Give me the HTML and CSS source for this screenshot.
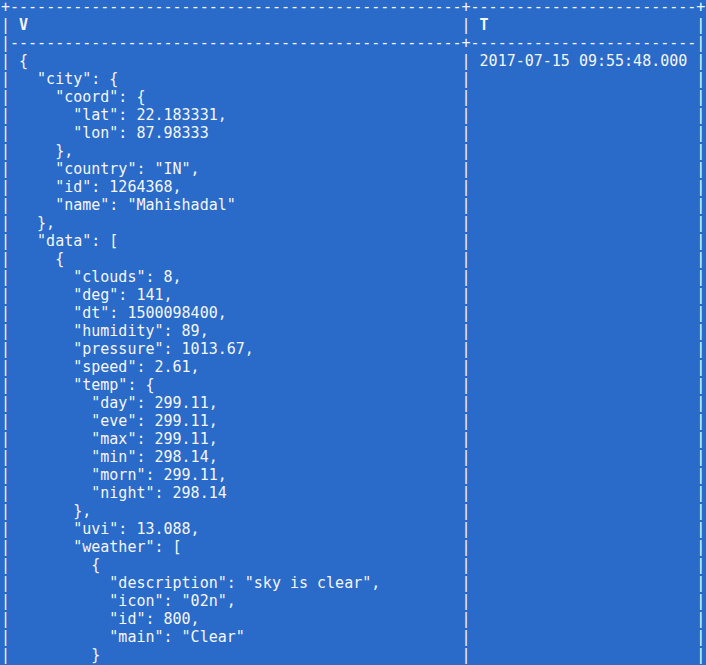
FILE: index.html
```html
<!DOCTYPE html>
<html>
<head>
<meta charset="utf-8">
<link rel="stylesheet" href="styles.css">
</head>
<body>
<div class="term">
  <div class="row"><span class="b">+</span><span class="lc">--------------------------------------------------</span><span class="b">+</span><span class="rc">-------------------------</span><span class="b">+</span></div>
  <div class="row"><span class="b">|</span><span class="lc pad hd">V</span><span class="b">|</span><span class="rc pad hd">T</span><span class="b">|</span></div>
  <div class="row"><span class="b">|</span><span class="lc">--------------------------------------------------</span><span class="b">+</span><span class="rc">-------------------------</span><span class="b">|</span></div>
  <div class="row"><span class="b">|</span><span class="lc pad">{</span><span class="b">|</span><span class="rc pad">2017-07-15 09:55:48.000</span><span class="b">|</span></div>
  <div class="row"><span class="b">|</span><span class="lc pad">  "city": {</span><span class="b">|</span><span class="rc pad"></span><span class="b">|</span></div>
  <div class="row"><span class="b">|</span><span class="lc pad">    "coord": {</span><span class="b">|</span><span class="rc pad"></span><span class="b">|</span></div>
  <div class="row"><span class="b">|</span><span class="lc pad">      "lat": 22.183331,</span><span class="b">|</span><span class="rc pad"></span><span class="b">|</span></div>
  <div class="row"><span class="b">|</span><span class="lc pad">      "lon": 87.98333</span><span class="b">|</span><span class="rc pad"></span><span class="b">|</span></div>
  <div class="row"><span class="b">|</span><span class="lc pad">    },</span><span class="b">|</span><span class="rc pad"></span><span class="b">|</span></div>
  <div class="row"><span class="b">|</span><span class="lc pad">    "country": "IN",</span><span class="b">|</span><span class="rc pad"></span><span class="b">|</span></div>
  <div class="row"><span class="b">|</span><span class="lc pad">    "id": 1264368,</span><span class="b">|</span><span class="rc pad"></span><span class="b">|</span></div>
  <div class="row"><span class="b">|</span><span class="lc pad">    "name": "Mahishadal"</span><span class="b">|</span><span class="rc pad"></span><span class="b">|</span></div>
  <div class="row"><span class="b">|</span><span class="lc pad">  },</span><span class="b">|</span><span class="rc pad"></span><span class="b">|</span></div>
  <div class="row"><span class="b">|</span><span class="lc pad">  "data": [</span><span class="b">|</span><span class="rc pad"></span><span class="b">|</span></div>
  <div class="row"><span class="b">|</span><span class="lc pad">    {</span><span class="b">|</span><span class="rc pad"></span><span class="b">|</span></div>
  <div class="row"><span class="b">|</span><span class="lc pad">      "clouds": 8,</span><span class="b">|</span><span class="rc pad"></span><span class="b">|</span></div>
  <div class="row"><span class="b">|</span><span class="lc pad">      "deg": 141,</span><span class="b">|</span><span class="rc pad"></span><span class="b">|</span></div>
  <div class="row"><span class="b">|</span><span class="lc pad">      "dt": 1500098400,</span><span class="b">|</span><span class="rc pad"></span><span class="b">|</span></div>
  <div class="row"><span class="b">|</span><span class="lc pad">      "humidity": 89,</span><span class="b">|</span><span class="rc pad"></span><span class="b">|</span></div>
  <div class="row"><span class="b">|</span><span class="lc pad">      "pressure": 1013.67,</span><span class="b">|</span><span class="rc pad"></span><span class="b">|</span></div>
  <div class="row"><span class="b">|</span><span class="lc pad">      "speed": 2.61,</span><span class="b">|</span><span class="rc pad"></span><span class="b">|</span></div>
  <div class="row"><span class="b">|</span><span class="lc pad">      "temp": {</span><span class="b">|</span><span class="rc pad"></span><span class="b">|</span></div>
  <div class="row"><span class="b">|</span><span class="lc pad">        "day": 299.11,</span><span class="b">|</span><span class="rc pad"></span><span class="b">|</span></div>
  <div class="row"><span class="b">|</span><span class="lc pad">        "eve": 299.11,</span><span class="b">|</span><span class="rc pad"></span><span class="b">|</span></div>
  <div class="row"><span class="b">|</span><span class="lc pad">        "max": 299.11,</span><span class="b">|</span><span class="rc pad"></span><span class="b">|</span></div>
  <div class="row"><span class="b">|</span><span class="lc pad">        "min": 298.14,</span><span class="b">|</span><span class="rc pad"></span><span class="b">|</span></div>
  <div class="row"><span class="b">|</span><span class="lc pad">        "morn": 299.11,</span><span class="b">|</span><span class="rc pad"></span><span class="b">|</span></div>
  <div class="row"><span class="b">|</span><span class="lc pad">        "night": 298.14</span><span class="b">|</span><span class="rc pad"></span><span class="b">|</span></div>
  <div class="row"><span class="b">|</span><span class="lc pad">      },</span><span class="b">|</span><span class="rc pad"></span><span class="b">|</span></div>
  <div class="row"><span class="b">|</span><span class="lc pad">      "uvi": 13.088,</span><span class="b">|</span><span class="rc pad"></span><span class="b">|</span></div>
  <div class="row"><span class="b">|</span><span class="lc pad">      "weather": [</span><span class="b">|</span><span class="rc pad"></span><span class="b">|</span></div>
  <div class="row"><span class="b">|</span><span class="lc pad">        {</span><span class="b">|</span><span class="rc pad"></span><span class="b">|</span></div>
  <div class="row"><span class="b">|</span><span class="lc pad">          "description": "sky is clear",</span><span class="b">|</span><span class="rc pad"></span><span class="b">|</span></div>
  <div class="row"><span class="b">|</span><span class="lc pad">          "icon": "02n",</span><span class="b">|</span><span class="rc pad"></span><span class="b">|</span></div>
  <div class="row"><span class="b">|</span><span class="lc pad">          "id": 800,</span><span class="b">|</span><span class="rc pad"></span><span class="b">|</span></div>
  <div class="row"><span class="b">|</span><span class="lc pad">          "main": "Clear"</span><span class="b">|</span><span class="rc pad"></span><span class="b">|</span></div>
  <div class="row"><span class="b">|</span><span class="lc pad">        }</span><span class="b">|</span><span class="rc pad"></span><span class="b">|</span></div>
  <div class="row"><span class="b">|</span><span class="lc pad">      ],</span><span class="b">|</span><span class="rc pad"></span><span class="b">|</span></div>
</div>
</body>
</html>
```
FILE: styles.css
```css
html, body {
  margin: 0;
  padding: 0;
  background: #2a6ac8;
  height: 100%;
  overflow: hidden;
}
.term {
  display: flex;
  flex-direction: column;
  padding: 0 0 0 1px;
  margin-top: -2px;
  font-family: "DejaVu Sans Mono", monospace;
  font-size: 15px;
  color: #f4f6fa;
}
.row {
  display: flex;
  height: 18px;
  line-height: 18px;
  white-space: pre;
}
.b {
  width: 1ch;
  flex: none;
}
.lc {
  width: 50ch;
  flex: none;
  overflow: hidden;
}
.rc {
  width: 25ch;
  flex: none;
  overflow: hidden;
}
.pad {
  padding-left: 1ch;
  box-sizing: border-box;
}
.hd {
  font-weight: bold;
}
```
